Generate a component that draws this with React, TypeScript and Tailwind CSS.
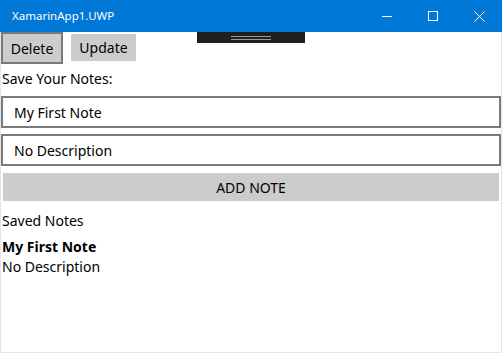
export default function App() {
  const font = { fontFamily: '"Noto Sans", "Open Sans", sans-serif' };
  return (
    <div
      className="relative flex h-[353px] w-[502px] flex-col overflow-hidden bg-white text-[14px] text-black shadow-[inset_1px_0_0_#e6e6e6,inset_-1px_-1px_0_#e6e6e6]"
      style={font}
    >
      {/* title bar */}
      <div className="flex h-8 shrink-0 items-center bg-[#0078d7] pl-3 text-white">
        <span className="flex-1 text-[11.5px]">XamarinApp1.UWP</span>
        <div className="flex h-full">
          <div className="flex w-[46px] items-center justify-center">
            <svg width="10" height="10" viewBox="0 0 10 10" fill="none" stroke="white" strokeWidth="1">
              <line x1="0" y1="5.5" x2="10" y2="5.5" />
            </svg>
          </div>
          <div className="flex w-[46px] items-center justify-center">
            <svg width="10" height="10" viewBox="0 0 10 10" fill="none" stroke="white" strokeWidth="1">
              <rect x="0.5" y="0.5" width="9" height="9" />
            </svg>
          </div>
          <div className="flex w-[46px] items-center justify-center">
            <svg width="11" height="11" viewBox="0 0 11 11" fill="none" stroke="white" strokeWidth="1">
              <line x1="0.5" y1="0.5" x2="10.5" y2="10.5" />
              <line x1="10.5" y1="0.5" x2="0.5" y2="10.5" />
            </svg>
          </div>
        </div>
      </div>

      {/* debug toolbar overlay */}
      <div className="absolute left-[197px] top-8 flex h-[11px] w-[108px] items-center justify-center bg-[#1f1f1f]">
        <div className="flex w-[40px] flex-col gap-[2px]">
          <div className="h-px bg-[#9a9a9a]" />
          <div className="h-px bg-[#9a9a9a]" />
        </div>
      </div>

      <div className="flex flex-col">
        <div className="flex items-start gap-2">
          <button className="ml-px h-8 w-[62px] border-2 border-[#7a7a7a] bg-[#cccccc] pt-px leading-none">
            Delete
          </button>
          <button className="mt-0.5 h-[27px] w-[65px] bg-[#cccccc] pt-px leading-none">Update</button>
        </div>

        <div className="mt-[5px] pl-0.5 leading-5">Save Your Notes:</div>

        <div className="mx-px mt-[7px] flex h-8 items-center border-2 border-[#7a7a7a] pl-[11px]">
          My First Note
        </div>
        <div className="mx-px mt-[6px] flex h-8 items-center border-2 border-[#7a7a7a] pl-[11px]">
          No Description
        </div>

        <div className="mx-[3px] mt-[7px] flex h-[28px] items-center justify-center bg-[#cccccc]">
          ADD NOTE
        </div>

        <div className="mt-[10px] pl-0.5 leading-5">Saved Notes</div>
        <div className="mt-[6px] pl-0.5 font-bold leading-5">My First Note</div>
        <div className="pl-0.5 leading-5">No Description</div>
      </div>
    </div>
  );
}
